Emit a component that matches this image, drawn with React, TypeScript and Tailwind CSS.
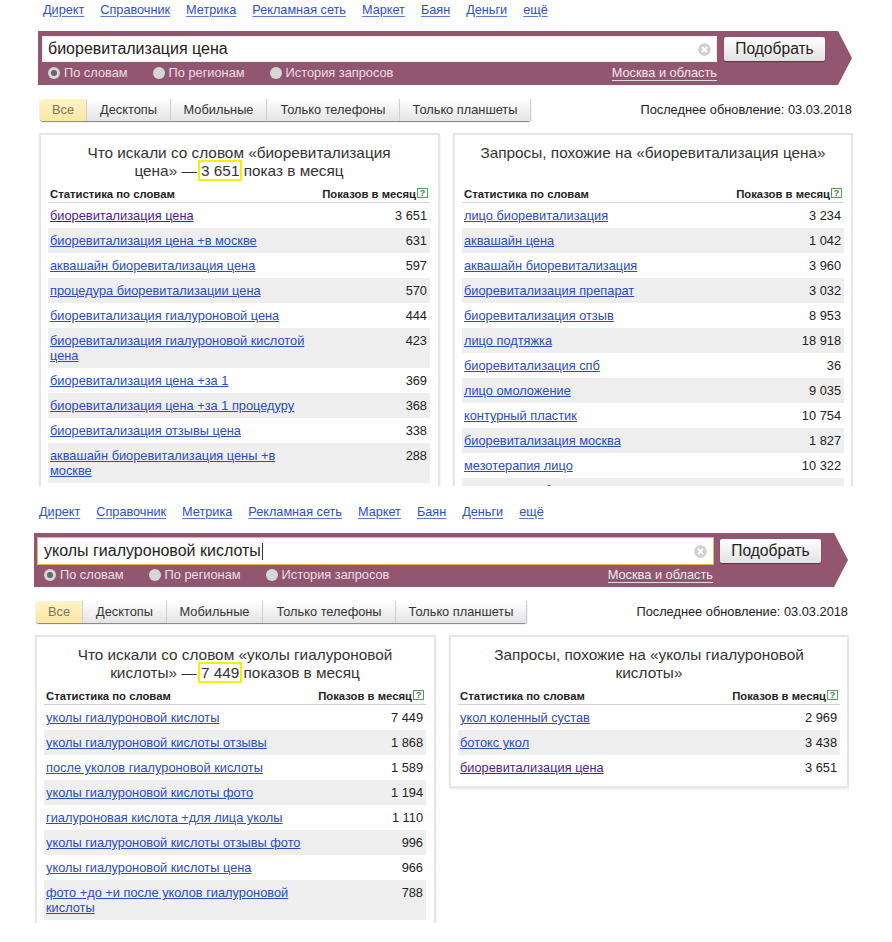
const navItems = ["Директ", "Справочник", "Метрика", "Рекламная сеть", "Маркет", "Баян", "Деньги", "ещё"];
const tabs = ["Все", "Десктопы", "Мобильные", "Только телефоны", "Только планшеты"];
const tabWidths = ["w-[47px]", "w-[84px]", "w-[96px]", "w-[133px]", "w-[131px]"];

type Row = { text: string; count: string; visited?: boolean };

const first = {
  query: "биоревитализация цена",
  focused: false,
  leftTitle: "Что искали со словом «биоревитализация цена» — ",
  leftCount: "3 651",
  leftSuffix: " показ в месяц",
  rightTitle: "Запросы, похожие на «биоревитализация цена»",
  left: [
    { text: "биоревитализация цена", count: "3 651", visited: true },
    { text: "биоревитализация цена +в москве", count: "631" },
    { text: "аквашайн биоревитализация цена", count: "597" },
    { text: "процедура биоревитализации цена", count: "570" },
    { text: "биоревитализация гиалуроновой цена", count: "444" },
    { text: "биоревитализация гиалуроновой кислотой цена", count: "423" },
    { text: "биоревитализация цена +за 1", count: "369" },
    { text: "биоревитализация цена +за 1 процедуру", count: "368" },
    { text: "биоревитализация отзывы цена", count: "338" },
    { text: "аквашайн биоревитализация цены +в москве", count: "288" },
  ] as Row[],
  right: [
    { text: "лицо биоревитализация", count: "3 234" },
    { text: "аквашайн цена", count: "1 042" },
    { text: "аквашайн биоревитализация", count: "3 960" },
    { text: "биоревитализация препарат", count: "3 032" },
    { text: "биоревитализация отзыв", count: "8 953" },
    { text: "лицо подтяжка", count: "18 918" },
    { text: "биоревитализация спб", count: "36" },
    { text: "лицо омоложение", count: "9 035" },
    { text: "контурный пластик", count: "10 754" },
    { text: "биоревитализация москва", count: "1 827" },
    { text: "мезотерапия лицо", count: "10 322" },
    { text: "мезотерапия биоревитализация", count: "1 712" },
  ] as Row[],
};

const second = {
  query: "уколы гиалуроновой кислоты",
  focused: true,
  leftTitle: "Что искали со словом «уколы гиалуроновой кислоты» — ",
  leftCount: "7 449",
  leftSuffix: " показов в месяц",
  rightTitle: "Запросы, похожие на «уколы гиалуроновой кислоты»",
  left: [
    { text: "уколы гиалуроновой кислоты", count: "7 449" },
    { text: "уколы гиалуроновой кислоты отзывы", count: "1 868" },
    { text: "после уколов гиалуроновой кислоты", count: "1 589" },
    { text: "уколы гиалуроновой кислоты фото", count: "1 194" },
    { text: "гиалуроновая кислота +для лица уколы", count: "1 110" },
    { text: "уколы гиалуроновой кислоты отзывы фото", count: "996" },
    { text: "уколы гиалуроновой кислоты цена", count: "966" },
    { text: "фото +до +и после уколов гиалуроновой кислоты", count: "788" },
  ] as Row[],
  right: [
    { text: "укол коленный сустав", count: "2 969" },
    { text: "ботокс укол", count: "3 438" },
    { text: "биоревитализация цена", count: "3 651", visited: true },
  ] as Row[],
};

function Radio({ label, checked }: { label: string; checked?: boolean }) {
  return (
    <span className="flex items-center gap-[4px]">
      <span className="flex h-[12px] w-[12px] items-center justify-center rounded-full bg-[#d6d6d6]">
        {checked && <span className="h-[6px] w-[6px] rounded-full bg-[#666]" />}
      </span>
      <span>{label}</span>
    </span>
  );
}

function ClearIcon() {
  return (
    <svg width="13" height="13" viewBox="0 0 13 13">
      <circle cx="6.5" cy="6.5" r="6.3" fill="#d0d0d0" />
      <path d="M4 4l5 5M9 4l-5 5" stroke="#fff" strokeWidth="2" />
    </svg>
  );
}

function StatTable({ rows }: { rows: Row[] }) {
  return (
    <div>
      <div className="flex h-[20px] items-center justify-between border-b border-[#d5d0e0] pt-[3px] pr-[2px] pl-[2px] text-[11.3px] font-bold text-[#222]">
        <span>Статистика по словам</span>
        <span className="flex items-center gap-[1px]">
          Показов в месяц
          <span className="mb-[2px] flex h-[10px] w-[11px] items-center justify-center border border-[#5a9a5a] text-[9px] leading-none font-bold text-[#3d7f3d]">
            ?
          </span>
        </span>
      </div>
      {rows.map((row, i) => (
        <div
          key={row.text}
          className={`flex justify-between pt-[5px] pr-[3px] pb-[5px] pl-[2px] leading-[15px] ${i % 2 ? "bg-[#eeeeee]" : "bg-white"}`}
        >
          <a className={`w-[262px] underline ${row.visited ? "text-[#551a8b]" : "text-[#2a4bc4]"}`}>{row.text}</a>
          <span className="text-[#222]">{row.count}</span>
        </div>
      ))}
    </div>
  );
}

function Section({ data, className }: { data: typeof first; className: string }) {
  return (
    <section className={`w-[815px] overflow-hidden text-[12.8px] ${className}`}>
      <nav className="flex h-[31px] gap-[16px] pt-[3px] pl-[5px] text-[12.7px]">
        {navItems.map((item) => (
          <a key={item} className="leading-[15px] text-[#2f50c4] underline decoration-[#5f79d6] underline-offset-[2px]">
            {item}
          </a>
        ))}
      </nav>

      <div className="flex h-[54px] bg-[#925670] pt-[5px] pl-[4px] [clip-path:polygon(0_0,800px_0,814px_50%,800px_100%,0_100%)]">
        <div className="w-[675px]">
          <div
            className={`flex h-[26px] items-center justify-between bg-white pr-[6px] pl-[6px] text-[16px] text-[#222] ${data.focused ? "shadow-[0_0_0_1px_#e8b84a]" : "shadow-[inset_0_0_0_1px_#eeeeee]"}`}
          >
            <span className="flex items-center">
              {data.query}
              {data.focused && <span className="ml-[1px] h-[17px] w-[1px] bg-[#333]" />}
            </span>
            <ClearIcon />
          </div>
          <div className="flex h-[22px] items-center justify-between pl-[6px] text-[#eadfe4]">
            <div className="flex gap-[25px]">
              <Radio label="По словам" checked />
              <Radio label="По регионам" />
              <Radio label="История запросов" />
            </div>
            <a className="border-b border-[#e5dbe0] leading-[15px] text-[#f1e8ec]">Москва и область</a>
          </div>
        </div>
        <button className="mt-[1px] ml-[7px] h-[24px] w-[101px] rounded-[2px] bg-gradient-to-b from-white to-[#e2e2e2] text-[15.6px] text-[#222] shadow-[0_1px_1px_rgba(0,0,0,0.4)]">
          Подобрать
        </button>
      </div>

      <div className="mt-[14px] flex h-[22px] items-center justify-between pl-[2px]">
        <div className="flex rounded-[3px] shadow-[0_1px_1px_rgba(0,0,0,0.5)]">
          {tabs.map((tab, i) => (
            <span
              key={tab}
              className={`flex h-[22px] items-center justify-center border-r border-[#cfcfcf] ${tabWidths[i]} ${
                i === 0
                  ? "rounded-l-[3px] bg-gradient-to-b from-[#fff3c6] to-[#fbe6a3] text-[#7a7460]"
                  : "bg-gradient-to-b from-white to-[#e4e4e4] text-[#333]"
              }`}
            >
              {tab}
            </span>
          ))}
        </div>
        <span className="pr-px text-[#222]">Последнее обновление: 03.03.2018</span>
      </div>

      <div className="mt-[12px] grid grid-cols-[401px_400px] items-start gap-[13px] pl-[1px]">
        <div className="border-2 border-[#e6e6e6] bg-white pt-[9px] pr-[8px] pb-[6px] pl-[7px] shadow-[0_1px_2px_rgba(0,0,0,0.1)]">
          <h2 className="mb-[3px] px-[24px] text-center text-[15.35px] leading-[18px] font-normal text-[#333]">
            {data.leftTitle}
            <span className="mx-[-3px] border-2 border-[#f7f000] px-[1px]">{data.leftCount}</span>
            {data.leftSuffix}
          </h2>
          <StatTable rows={data.left} />
        </div>
        <div className="border-2 border-[#e6e6e6] bg-white px-[7px] pt-[9px] pb-[6px] shadow-[0_1px_2px_rgba(0,0,0,0.1)]">
          <h2 className="mb-[3px] h-[36px] px-[15px] text-center text-[15.35px] leading-[18px] font-normal text-[#333]">
            {data.rightTitle}
          </h2>
          <StatTable rows={data.right} />
        </div>
      </div>
    </section>
  );
}

export default function App() {
  return (
    <div className="h-[942px] w-[892px] overflow-hidden bg-white font-['Liberation_Sans',Arial,sans-serif]">
      <Section data={first} className="ml-[38px] h-[486px]" />
      <Section data={second} className="mt-[16px] ml-[34px] h-[421px]" />
    </div>
  );
}
